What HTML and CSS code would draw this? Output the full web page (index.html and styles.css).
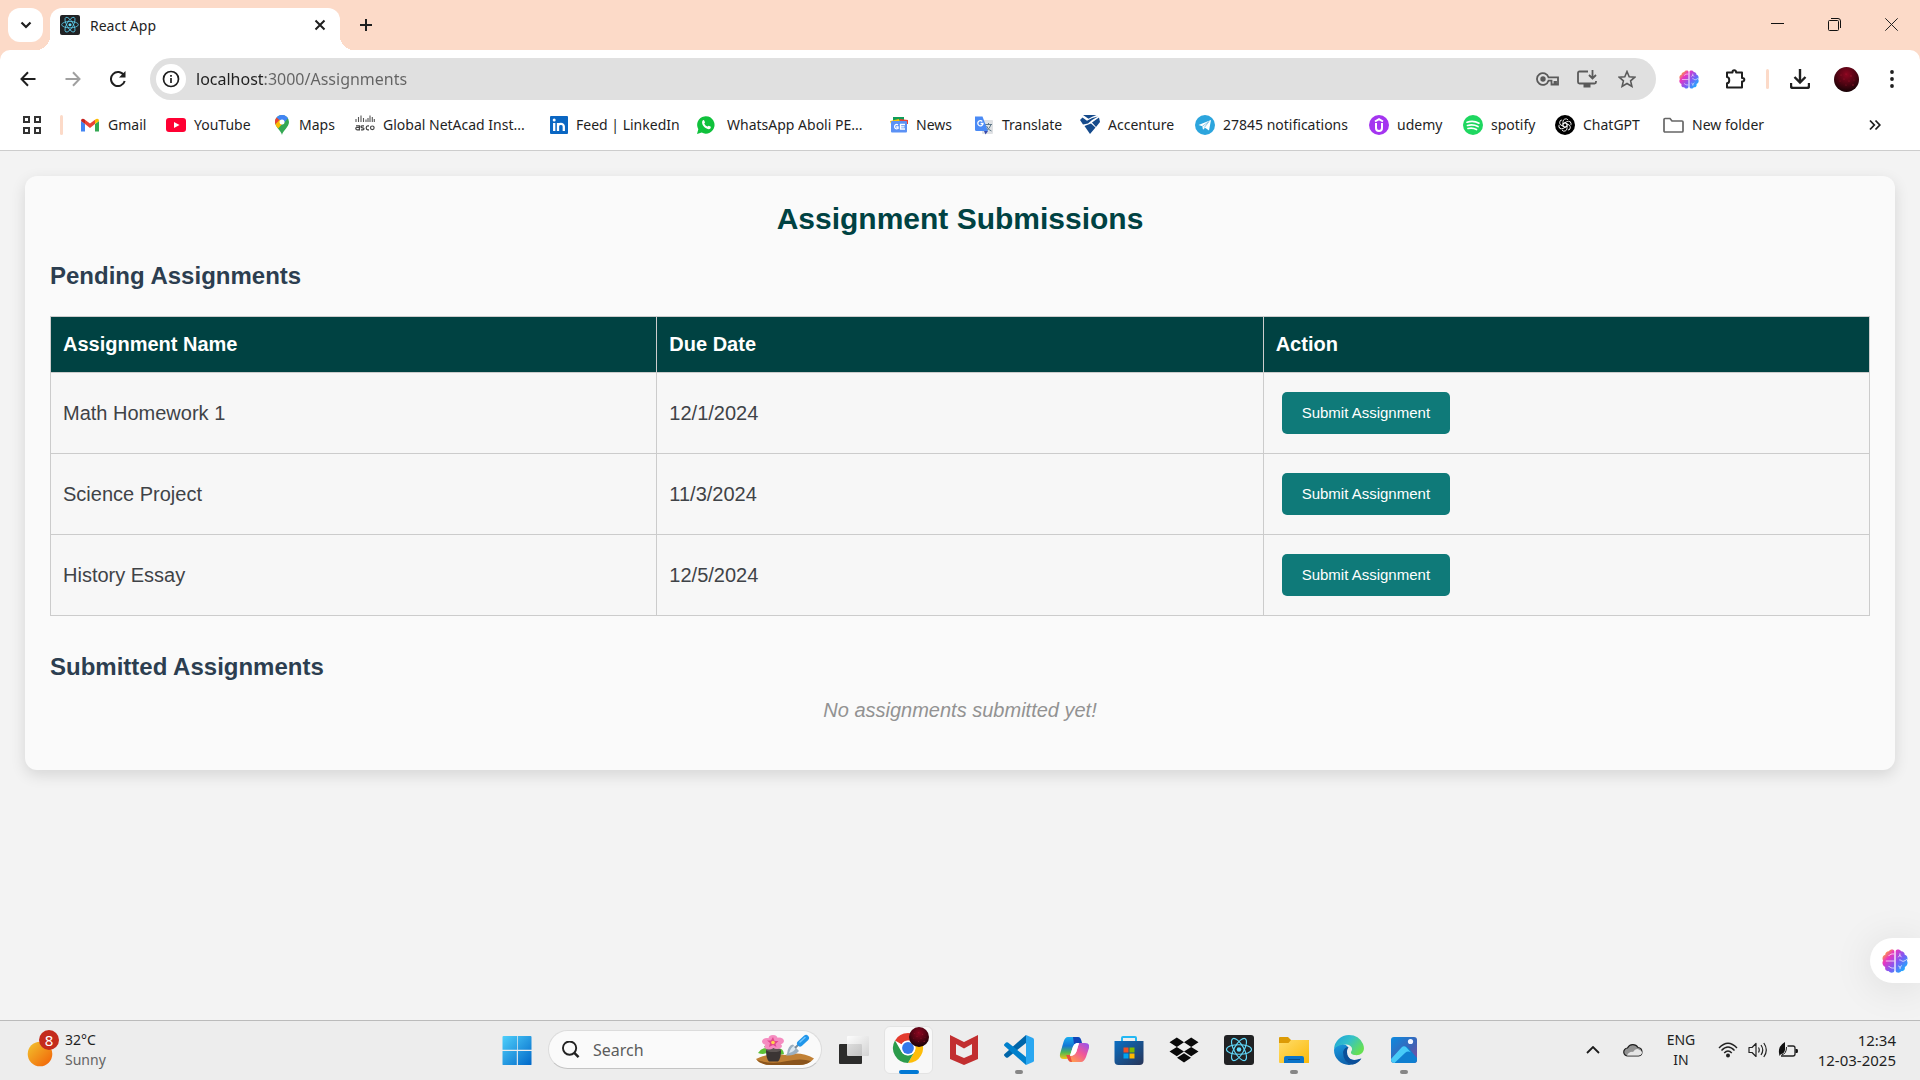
FILE: index.html
```html
<!DOCTYPE html>
<html lang="en">
<head>
<meta charset="utf-8">
<meta name="viewport" content="width=device-width, initial-scale=1">
<title>React App</title>
<link rel="stylesheet" href="styles.css">
</head>
<body>
<svg class="defs" width="0" height="0" aria-hidden="true">
  <defs>
    <linearGradient id="brain-fill" x1="0" y1="0" x2="24" y2="22" gradientUnits="userSpaceOnUse">
      <stop offset="0.1" stop-color="#ffb02e"/><stop offset="0.3" stop-color="#e935c1"/><stop offset="0.58" stop-color="#7b5cf5"/><stop offset="0.9" stop-color="#12b5ff"/>
    </linearGradient>
    <radialGradient id="avatar-fill" cx="0.5" cy="0.3" r="0.7">
      <stop offset="0" stop-color="#8c0620"/><stop offset="0.5" stop-color="#560414"/><stop offset="1" stop-color="#160205"/>
    </radialGradient>
    <linearGradient id="win-fill" x1="0" y1="0" x2="1" y2="1"><stop offset="0" stop-color="#4fd0fb"/><stop offset="1" stop-color="#0067c8"/></linearGradient>
    <linearGradient id="sun-fill" x1="0" y1="0" x2="1" y2="1"><stop offset="0" stop-color="#f2c52e"/><stop offset="1" stop-color="#f25e06"/></linearGradient>
    <linearGradient id="store-fill" x1="0" y1="0" x2="1" y2="1"><stop offset="0" stop-color="#0a6fc4"/><stop offset="1" stop-color="#283457"/></linearGradient>
    <linearGradient id="folder-fill" x1="0" y1="0" x2="1" y2="1"><stop offset="0" stop-color="#ffdd6b"/><stop offset="1" stop-color="#fbb909"/></linearGradient>
    <linearGradient id="photo-fill" x1="0" y1="0" x2="1" y2="1"><stop offset="0" stop-color="#0b8be0"/><stop offset="0.6" stop-color="#3f62b5"/><stop offset="1" stop-color="#8c4a9d"/></linearGradient>
    <linearGradient id="edge-top" x1="0" y1="0" x2="1" y2="0.6"><stop offset="0" stop-color="#1ba0dc"/><stop offset="0.5" stop-color="#35c1c8"/><stop offset="1" stop-color="#66e052"/></linearGradient>
    <linearGradient id="edge-low" x1="0" y1="0" x2="0.6" y2="1"><stop offset="0" stop-color="#1b9de2"/><stop offset="1" stop-color="#0c59a4"/></linearGradient>
    <linearGradient id="cop-left" x1="0" y1="0" x2="0" y2="1"><stop offset="0" stop-color="#1aaef0"/><stop offset="0.4" stop-color="#1376d6"/><stop offset="0.7" stop-color="#52b752"/><stop offset="1" stop-color="#f6c514"/></linearGradient>
    <linearGradient id="cop-right" x1="1" y1="0" x2="0.2" y2="1"><stop offset="0" stop-color="#8e52f4"/><stop offset="0.5" stop-color="#f0569a"/><stop offset="1" stop-color="#ff9d4f"/></linearGradient>
    <linearGradient id="view-fill" x1="0" y1="0" x2="1" y2="1"><stop offset="0" stop-color="#ffffff"/><stop offset="1" stop-color="#cfcfcf"/></linearGradient>
  </defs>
  <symbol id="react" viewBox="0 0 30 30">
    <rect width="30" height="30" rx="3" fill="#212224"/>
    <g fill="none" stroke="#61dafb" stroke-width="1.1"><ellipse cx="15" cy="14.500" rx="12.500" ry="4.800"/><ellipse cx="15" cy="14.500" rx="12.500" ry="4.800" transform="rotate(60 15 14.500)"/><ellipse cx="15" cy="14.500" rx="12.500" ry="4.800" transform="rotate(120 15 14.500)"/></g>
    <circle cx="15" cy="14.500" r="2.300" fill="#61dafb"/>
  </symbol>
  <symbol id="brain" viewBox="0 0 24 22">
    <path d="M11.400 2v18c0 2-4 2.600-5.200.3-2.400.4-3.900-1.700-3.200-3.800C.4 15.400-.2 12.400 1 10.700-.2 8.300.8 5.800 3 5.300 3 3 4.800 1.900 6.300 2 7.500-.3 11.400-.2 11.400 2zM12.600 2v18c0 2 4 2.600 5.200.3 2.400.4 3.900-1.700 3.200-3.800 2.600-1.100 3.200-4.100 2-5.800 1.200-2.400.2-4.900-2-5.400C21 3 19.200 1.900 17.700 2c-1.200-2.300-5.100-2.200-5.100 0z" fill="url(#brain-fill)"/>
    <path d="M3.500 11h7.900M6 6c1.400 0 1.500-1.500 3.500-1.500h1.700M6 16c1.400 0 1.500 1.500 3.500 1.500h1.700M15 7.500l1.500-1.800L18 7.500M16.500 4v2M16 10c2 0 2 1.500 4 1.200 1.400-.2 2-1.200 3-1.800M15 15.500l1.700 1.200 1.700-1.600M16.700 16.500v2" fill="none" stroke="#fff" stroke-width=".9" opacity="0.75"/>
  </symbol>
  <symbol id="avatar" viewBox="0 0 25 25">
    <circle cx="12.500" cy="12.500" r="12.500" fill="url(#avatar-fill)"/>
    <g fill="#c9283e" opacity="0.55"><circle cx="7" cy="8" r=".6"/><circle cx="12" cy="7" r=".5"/><circle cx="17" cy="9" r=".7"/><circle cx="10" cy="12" r=".6"/><circle cx="15" cy="14" r=".6"/><circle cx="19" cy="18" r=".8"/><circle cx="6" cy="14" r=".5"/><circle cx="12" cy="18" r=".6"/><circle cx="20" cy="13" r=".5"/></g>
  </symbol>
</svg>

<div class="window">
  <header class="chrome">
    <div class="tabstrip">
      <button class="tab-search" aria-label="Search tabs"><svg width="12" height="8" viewBox="0 0 12 8"><path d="M1.500 1.500 6 6l4.500-4.500" fill="none" stroke="#1f1f1f" stroke-width="2.200"/></svg></button>
      <div class="tab">
        <svg width="20" height="20"><use href="#react"/></svg>
        <span class="tab-title">React App</span>
        <button class="plain" aria-label="Close tab"><svg width="12" height="12" viewBox="0 0 12 12"><path d="M1.500 1.500l9 9M10.500 1.500l-9 9" stroke="#1f1f1f" stroke-width="2"/></svg></button>
      </div>
      <button class="new-tab plain" aria-label="New tab"><svg width="14" height="14" viewBox="0 0 14 14"><path d="M7 1v12M1 7h12" stroke="#1f1f1f" stroke-width="2"/></svg></button>
      <div class="window-buttons">
        <button class="plain" aria-label="Minimize"><svg width="13" height="13" viewBox="0 0 13 13"><path d="M0 5.500h13" stroke="#111"/></svg></button>
        <button class="plain" aria-label="Restore"><svg width="13" height="13" viewBox="0 0 13 13"><path d="M.5 3.500q0-1 1-1h8q1 0 1 1v8q0 1-1 1h-8q-1 0-1-1zM3 .5h7q2.500 0 2.500 2.500v7" fill="none" stroke="#111"/></svg></button>
        <button class="plain" aria-label="Close"><svg width="13" height="13" viewBox="0 0 13 13"><path d="M.3.3l12.400 12.400M12.700.3.3 12.700" stroke="#222"/></svg></button>
      </div>
    </div>

    <div class="toolbar">
      <nav class="nav-buttons" aria-label="History">
        <button class="plain" aria-label="Back"><svg width="16" height="16" viewBox="0 0 16 16"><path d="M15.500 8H2M8 1.300 1.500 8 8 14.700" fill="none" stroke="#1f1f1f" stroke-width="2"/></svg></button>
        <button class="plain" aria-label="Forward"><svg width="16" height="16" viewBox="0 0 16 16"><path d="M.5 8H14M8 1.300 14.500 8 8 14.700" fill="none" stroke="#a0a0a0" stroke-width="2"/></svg></button>
        <button class="plain" aria-label="Reload"><svg width="16" height="16" viewBox="0 0 16 16"><path d="M14 4.500A7 7 0 1 0 14.700 10" fill="none" stroke="#1f1f1f" stroke-width="2"/><path d="M15.500 0v6.500H9z" fill="#1f1f1f"/></svg></button>
      </nav>
      <div class="omnibox">
        <button class="site-info plain" aria-label="Site information"><svg width="18" height="18" viewBox="0 0 18 18"><circle cx="9" cy="9" r="7.500" fill="none" stroke="#1f1f1f" stroke-width="1.700"/><path d="M9 8v5M9 5v1.800" stroke="#1f1f1f" stroke-width="1.700"/></svg></button>
        <input class="url" type="text" aria-label="Address" value="localhost:3000/Assignments">
        <button class="omni-button plain" aria-label="Passwords"><svg width="23" height="14" viewBox="0 0 23 14"><path d="M12.500 5.300A5.900 5.900 0 1 0 12.500 8.700H15.500V12.500h3V10h1.500v2.500H22V5.300z" fill="none" stroke="#5a5a5a" stroke-width="1.800"/><circle cx="7" cy="7" r="2.700" fill="#5a5a5a"/></svg></button>
        <button class="omni-button plain" aria-label="Install app"><svg width="20" height="18" viewBox="0 0 20 18"><path d="M11 1.500H2.500Q1 1.500 1 3v9q0 1.500 1.500 1.500h15q1.500 0 1.500-1.500v-1M15.500 0v8M12 5l3.500 3.500L19 5" fill="none" stroke="#5a5a5a" stroke-width="1.800"/><path d="M6.500 14h7v3.500h-7z" fill="#5a5a5a"/></svg></button>
        <button class="omni-button plain" aria-label="Bookmark"><svg width="18" height="18" viewBox="0 0 18 18"><path d="M9 1.500l2.200 5.200 5.600.5-4.200 3.700 1.300 5.500L9 13.500l-4.900 2.900 1.300-5.500L1.200 7.200l5.600-.5z" fill="none" stroke="#5a5a5a" stroke-width="1.600"/></svg></button>
      </div>
      <div class="extensions">
        <button class="plain" aria-label="AI assistant"><svg width="20" height="19"><use href="#brain"/></svg></button>
        <button class="plain" aria-label="Extensions"><svg width="21" height="20" viewBox="0 0 21 20"><path d="M2 3.500h5.500V3a1.800 1.800 0 0 1 3.600 0v.5H17V9h.5a1.800 1.800 0 0 1 0 3.600H17v6H2v-4.300c3-.2 3-6 0-6.300z" fill="none" stroke="#1f1f1f" stroke-width="2" stroke-linejoin="round"/></svg></button>
        <span class="divider"></span>
        <button class="plain" aria-label="Downloads"><svg width="20" height="20" viewBox="0 0 20 20"><path d="M10 0v13M4.500 8 10 13.500 15.500 8M1 14v3q0 2 2 2h14q2 0 2-2v-3" fill="none" stroke="#1f1f1f" stroke-width="2.400"/></svg></button>
        <button class="plain" aria-label="Profile"><svg width="25" height="25"><use href="#avatar"/></svg></button>
        <button class="plain" aria-label="Menu"><svg width="4" height="18" viewBox="0 0 4 18"><g fill="#1f1f1f"><circle cx="2" cy="2" r="1.900"/><circle cx="2" cy="9" r="1.900"/><circle cx="2" cy="16" r="1.900"/></g></svg></button>
      </div>
    </div>

    <nav class="bookmarks" aria-label="Bookmarks">
      <button class="apps plain" aria-label="Apps"><svg width="18" height="18" viewBox="0 0 18 18"><path d="M1 1h5v5H1zM12 1h5v5h-5zM1 12h5v5H1zM12 12h5v5h-5z" fill="none" stroke="#333" stroke-width="2"/></svg></button>
      <span class="divider"></span>
      <div class="bookmark-list">
        <a href="#gmail"><svg width="20" height="20" viewBox="0 0 20 20"><path d="M1 16.500V6l4 3v7.500z" fill="#4285f4"/><path d="M19 16.500V6l-4 3v7.500z" fill="#34a853"/><path d="M1 6q0-3 3-2l1 .8V9L1 6z" fill="#c5221f"/><path d="M19 6q0-3-3-2l-1 .8V9l4-3z" fill="#fbbc04"/><path d="M5 4.800 10 8.600l5-3.800V9l-5 3.900L5 9z" fill="#ea4335"/></svg>Gmail</a>
        <a href="#youtube"><svg width="20" height="20" viewBox="0 0 20 20"><rect y="3" width="20" height="14" rx="3" fill="#ff0033"/><path d="M8 7l5.500 3L8 13z" fill="#fff"/></svg>YouTube</a>
        <a href="#maps"><svg width="18" height="20" viewBox="1 0 18 20"><path d="M10 20C9 15.500 3 12 3 7a7 7 0 0 1 14 0c0 5-6 8.500-7 13z" fill="#34a853"/><path d="M4.600 2.500A7 7 0 0 1 16 3.300L10 10z" fill="#4285f4"/><path d="M4.600 2.500A7 7 0 0 0 3.400 9.300L8.500 6z" fill="#ea4335"/><path d="M3.400 9.300c.6 1.700 1.700 2.900 2.700 4.200L12 7 7.700 4.800z" fill="#fbbc04"/><circle cx="10" cy="7" r="2.500" fill="#fff"/></svg>Maps</a>
        <a href="#netacad"><svg width="20" height="20" viewBox="0 0 20 20"><path d="M1 4v3M3.500 2v5M6 .5V7M8.500 3v4M11 4.500V7M13 3v4M15 .5V7M17.300 2v5M19.300 4v3" stroke="#555" stroke-width="1.100"/><path d="M1 10.800h3.400v4H2Q.8 14.800.8 13.600T2 12.500h2.400M9 10.800H7.200q-1.200 0-1.200 1t1.200 1h.6q1.200 0 1.200 1t-1.200 1H6M14 10.800h-1.200q-1.600 0-1.600 2t1.600 2H14" fill="none" stroke="#444" stroke-width="1.200"/><circle cx="17.300" cy="12.800" r="1.800" fill="none" stroke="#444" stroke-width="1.200"/></svg>Global NetAcad Inst...</a>
        <a href="#linkedin"><svg width="18" height="20" viewBox="0 0 18 20"><rect y="1" width="18" height="18" rx="1" fill="#0a66c2"/><path d="M4.200 8v8M8 8v8M8 11.500c0-3.500 5.800-3.500 5.800 0V16" fill="none" stroke="#fff" stroke-width="2.300"/><circle cx="4.200" cy="5" r="1.500" fill="#fff"/></svg>Feed | LinkedIn</a>
        <a href="#whatsapp" class="wide-gap"><svg width="18" height="20" viewBox="1 0 18 20"><path d="M1 19l1.300-4.700A8.700 8.700 0 1 1 5.700 17.600z" fill="#10c13c"/><path d="M6.700 5.400c.6-.6 1.200-.4 1.500.2l.8 1.700c0 .6-.8 1-.7 1.500.7 1.300 1.700 2.200 3 2.800.5 0 .9-.9 1.400-.9l1.800.9c.6.500.3 1.600-.4 2.200-2.200 1.600-7.700-2-8-6-.1-.9.100-1.800.6-2.400z" fill="#fff"/></svg>WhatsApp Aboli PE...</a>
        <a href="#news"><svg width="18" height="20" viewBox="1 0 18 20"><path d="M4 2h11v5H4z" fill="#0f9d58"/><path d="M1 6l9-2 2 5H2z" fill="#ffc107"/><path d="M19 5l-8-1v5h8z" fill="#ea4335"/><rect x="2" y="6" width="16" height="11.500" rx="1" fill="#5b91f5"/><path d="M9 9.800C4.500 7.800 4.500 15.500 9 13.500V12H7.200M16 9.500h-4.500v4.500H16M11.500 11.800h4" fill="none" stroke="#fff" stroke-width="1.300"/></svg>News</a>
        <a href="#translate"><svg width="20" height="20" viewBox="0 0 20 20"><rect x="8" y="5" width="11" height="14" rx="1" fill="#dfe1e4"/><path d="M11 9.500h7M14.500 8v1.500M17 9.500q-1 4-5 6.500M12.500 11q1.500 4 5 5" fill="none" stroke="#607988"/><path d="M1 1.500h7.500L14 16H2.500Q1 16 1 14.500z" fill="#4a8af5"/><path d="M10 16h4l-2.500 3.500z" fill="#3848ab"/><path d="M8.300 6.500A2.600 2.600 0 1 0 9 8.500H6.600" fill="none" stroke="#fff" stroke-width="1.300"/></svg>Translate</a>
        <a href="#accenture"><svg width="20" height="20" viewBox="0 0 20 20"><path d="M3 0h13.500Q12 1.500 8.500 3.800zM0 5l2.500-2.500L7 5.800Q12 2.500 18 1.500 12 4.500 8 8.500L3 9.500zM12 7.500 19 2.500 20 7l-4 5zM4.500 11l6.500-2.500 4.500 4L10 19z" fill="#154a8b"/></svg>Accenture</a>
        <a href="#telegram"><svg width="20" height="20" viewBox="0 0 20 20"><circle cx="10" cy="10" r="10" fill="#2ca5dd"/><path d="M3.500 10 16 5l-2 10.500-4-2.800L8 14.700l-.7-3.400z" fill="#fff"/><path d="M7.300 11.300 14 6.500l-4.700 6" fill="none" stroke="#94c9e6"/></svg>27845 notifications</a>
        <a href="#udemy"><svg width="20" height="20" viewBox="0 0 20 20"><circle cx="10" cy="10" r="10" fill="#a435f0"/><path d="M6 6.500l4-2.400 4 2.400M7 8v5c0 4 6 4 6 0V8" fill="none" stroke="#fff" stroke-width="2"/></svg>udemy</a>
        <a href="#spotify"><svg width="20" height="20" viewBox="0 0 20 20"><circle cx="10" cy="10" r="10" fill="#1ed760"/><path d="M4 7.200q6.500-2 12 1M4.500 10.500q5.500-1.500 10.500 1M5 13.500q4.500-1.200 8.500 1" fill="none" stroke="#fff" stroke-width="1.700" stroke-linecap="round"/></svg>spotify</a>
        <a href="#chatgpt"><svg width="20" height="20" viewBox="0 0 20 20"><circle cx="10" cy="10" r="10" fill="#000"/><g fill="none" stroke="#fff" stroke-width=".9"><path id="petal" d="M10 12.300 8 11.200V6.700a2.800 2.800 0 0 1 5-1.800"/><use href="#petal" transform="rotate(60 10 10)"/><use href="#petal" transform="rotate(120 10 10)"/><use href="#petal" transform="rotate(180 10 10)"/><use href="#petal" transform="rotate(240 10 10)"/><use href="#petal" transform="rotate(300 10 10)"/></g></svg>ChatGPT</a>
        <a href="#folder"><svg width="22" height="20" viewBox="0 0 22 20"><path d="M2 4.500q0-1 1-1h5l2 2.500h10q1 0 1 1v9q0 1-1 1H3q-1 0-1-1z" fill="none" stroke="#666" stroke-width="1.700"/></svg>New folder</a>
      </div>
      <button class="more plain" aria-label="More bookmarks"><svg width="12" height="12" viewBox="0 0 12 12"><path d="M1 1.500 5.300 6 1 10.500M6.500 1.500 10.800 6l-4.300 4.500" fill="none" stroke="#1f1f1f" stroke-width="1.800"/></svg></button>
    </nav>
  </header>

  <main class="page">
    <section class="card">
      <h1>Assignment Submissions</h1>
      <h2>Pending Assignments</h2>
      <table>
        <thead><tr><th scope="col">Assignment Name</th><th scope="col">Due Date</th><th scope="col">Action</th></tr></thead>
        <tbody>
          <tr><td>Math Homework 1</td><td>12/1/2024</td><td><button class="submit">Submit Assignment</button></td></tr>
          <tr><td>Science Project</td><td>11/3/2024</td><td><button class="submit">Submit Assignment</button></td></tr>
          <tr><td>History Essay</td><td>12/5/2024</td><td><button class="submit">Submit Assignment</button></td></tr>
        </tbody>
      </table>
      <h2>Submitted Assignments</h2>
      <p class="empty">No assignments submitted yet!</p>
    </section>
    <button class="assistant" aria-label="Open assistant"><svg width="26" height="24"><use href="#brain"/></svg></button>
  </main>

  <footer class="taskbar">
    <button class="weather plain">
      <svg width="32" height="36" viewBox="0 0 32 36"><circle cx="13" cy="22" r="12.300" fill="url(#sun-fill)"/></svg>
      <span class="badge">8</span>
      <span class="weather-text"><span>32°C</span><span class="dim">Sunny</span></span>
    </button>
    <div class="apps-row">
      <button class="app plain" aria-label="Start"><svg width="30" height="30" viewBox="0 0 30 30"><path d="M1.500 1h13.700v13.700H.5V2q0-1 1-1zM15.900 1h12.600q1 0 1 1v12.700H15.900zM.5 15.900h14.300v14.300H1.500q-1 0-1-1zM15.900 15.900h13.600v13.300q0 1-1 1H15.900z" fill="url(#win-fill)"/></svg></button>
      <label class="search">
        <svg width="18" height="18" viewBox="1 1 19 19"><circle cx="9" cy="8.500" r="7" fill="none" stroke="#222" stroke-width="2"/><path d="M14 13.500l4.500 4.500" stroke="#222" stroke-width="2.600"/></svg>
        <input type="text" placeholder="Search" aria-label="Search">
        <svg width="60" height="32" viewBox="0 0 60 32"><path d="M1 25q14-7 29-4 16-4 29 3.500Q54 31 44 31H17Q5 31 1 25z" fill="#c08035"/><path d="M2 26q15 5 30 1 14-3 24 0-4 4-12 4H17Q6 31 2 26z" fill="#8a541c"/><path d="M3 19q5-7 12-4-3 7-12 4zM29 20q-1-7-8-5 1 7 8 5zM9 12q5 0 8 5l-5 1z" fill="#5cc036"/><path d="M11 16h15q0 9-3 11.500h-9Q11 25 11 16z" fill="#3b3534"/><ellipse cx="18.500" cy="16" rx="7.500" ry="2" fill="#5d5553"/><g fill="#f58cc0"><ellipse cx="18" cy="4.500" rx="4.500" ry="3.500"/><ellipse cx="12" cy="7.500" rx="5" ry="3.500"/><ellipse cx="24" cy="7" rx="5" ry="3.500"/><ellipse cx="14" cy="12.500" rx="4.500" ry="3"/><ellipse cx="22" cy="12" rx="5" ry="3"/></g><path d="M18 3l1.500 4 4 0-3 3 1 3-3.500-2-4 2 1-4-3-2.500h4z" fill="#e2488e"/><circle cx="18" cy="8.500" r="1.800" fill="#ffd34a"/><path d="M32 20q1-9 6-9.500l6 6.500q-4 5-13 4.500z" fill="#9cb0c0"/><path d="M34 19q2-6 5-7l2 2q-2 4-7 5z" fill="#dbe7ef"/><path d="M40 14l4.500-4.500" stroke="#778a99" stroke-width="2"/><path d="M45 9.500 51 4" stroke="#2196ea" stroke-width="6" stroke-linecap="round"/><path d="M45 8 50 3.500" stroke="#6fc6ff" stroke-width="1.500" stroke-linecap="round"/></svg>
      </label>
      <button class="app plain" aria-label="Task view"><svg width="30" height="30" viewBox="0 0 30 30"><rect y="9" width="23" height="20" rx="1" fill="#2c2c2b"/><rect x="8" y="1" width="22" height="20" rx="1" fill="url(#view-fill)" opacity=".88"/></svg></button>
      <button class="app current plain" aria-label="Chrome"><svg width="38" height="38" viewBox="0 0 38 38"><circle cx="16" cy="21" r="15" fill="#fff"/><path d="M3 13.500A15 15 0 0 1 29 13.500H16a7.500 7.500 0 0 0-6.500 3.800z" fill="#e33b2e"/><path d="M29 13.500A15 15 0 0 1 16 36l6.500-11.200a7.500 7.500 0 0 0-.2-7.700L20 13.500z" fill="#fdbd0a"/><path d="M3 13.500A15 15 0 0 0 16 36l6.500-11.200a7.500 7.500 0 0 1-13 0z" fill="#2b9b4b"/><circle cx="16" cy="21" r="7.300" fill="#fff"/><circle cx="16" cy="21" r="5.900" fill="#3478ea"/><use href="#avatar" x="17" y="0" width="20" height="20"/></svg></button>
      <button class="app plain" aria-label="McAfee"><svg width="30" height="30" viewBox="0 0 30 30"><path d="M1 0l14 7L29 0v24L15 30 1 24zM7 9v10.500l8 3.500 8-3.500V9l-8 4.500z" fill="#c22f30" fill-rule="evenodd"/></svg></button>
      <button class="app open plain" aria-label="Visual Studio Code"><svg width="30" height="30" viewBox="0 0 30 30"><path d="M22 0v8L4 22.500q-1 .5-2 0L.5 21q-1-1 0-2z" fill="#0065a9"/><path d="M22 30v-8L4 7.500q-1-.5-2 0L.5 9q-1 1 0 2z" fill="#0080cc"/><path d="M22 0l7 3q1 .5 1 1.500v21q0 1-1 1.500l-7 3z" fill="#2aa7f1"/></svg></button>
      <button class="app plain" aria-label="Copilot"><svg width="30" height="30" viewBox="0 0 30 30"><path d="M9 2h10q3 0 2 3l-1 3q-5 0-6.500 5l-3 9Q9.500 24 7 24H5q-5 0-4-5L4.500 7Q6 2 9 2z" fill="url(#cop-left)"/><path d="M14 2h5q3 0 4 6h-5l-3 1z" fill="#1244b7"/><path d="M22 27H12q-3 0-2-3l1-3q5 0 6.500-5l2.500-8h6q5 0 4 5l-3 9Q25 27 22 27z" fill="url(#cop-right)"/><path d="M7 20h4l2 7q-4 0-5-5z" fill="#e94f3c"/><path d="M14 11.500q1-3 3.500-3.500h2.500L17.500 16.500Q16 20.500 11 21z" fill="#fff"/></svg></button>
      <button class="app plain" aria-label="Microsoft Store"><svg width="30" height="30" viewBox="0 0 30 30"><path d="M8 8V3q0-1 1-1h12q1 0 1 1v5" fill="none" stroke="#24b8f3" stroke-width="2"/><path d="M.5 6h29v20q0 4-4 4h-21q-4 0-4-4z" fill="url(#store-fill)"/><path d="M9.500 12.500h5v5h-5z" fill="#f25022"/><path d="M15.500 12.500h5v5h-5z" fill="#7fba00"/><path d="M9.500 18.500h5v5h-5z" fill="#00a4ef"/><path d="M15.500 18.500h5v5h-5z" fill="#ffb900"/></svg></button>
      <button class="app plain" aria-label="Dropbox"><svg width="30" height="30" viewBox="0 0 30 30"><path d="M7.800 2.500 15 7.200l-7.200 4.700L.5 7.200zM22.200 2.500l7.300 4.700-7.300 4.700L15 7.200zM7.800 12l7.200 4.600-7.200 4.700L.5 16.600zM22.200 12l7.300 4.600-7.300 4.700L15 16.600zM15 18.200l7 4.500-7 4.800-7-4.800z" fill="#0a0a0a"/></svg></button>
      <button class="app plain" aria-label="React app"><svg width="30" height="30"><use href="#react"/></svg></button>
      <button class="app open plain" aria-label="File Explorer"><svg width="30" height="30" viewBox="0 0 30 30"><path d="M0 3q0-1 1-1h8l3 3h17q1 0 1 1v6H0z" fill="#dc9b06"/><path d="M0 8h9.500L12 5h17q1 0 1 1v21.500q0 .5-1 .5H1q-1 0-1-1z" fill="url(#folder-fill)"/><path d="M5 28v-5q0-2 2-2h16q2 0 2 2v5z" fill="#0b74c9"/><path d="M9 24.500h12" stroke="#064e8d"/></svg></button>
      <button class="app plain" aria-label="Edge"><svg width="30" height="30" viewBox="0 0 30 30"><path d="M0 15A15 15 0 0 0 15 30q7 0 12-6.500-11 4-14-3.500-2-5 1-8-3-4-8-2.500Q0 11 0 15z" fill="url(#edge-low)"/><path d="M9 17q0 11 10 12.500 5-1 8.500-6-9 4-13-1.500-3-5 0-10-4 0-5.500 5z" fill="#0b4f99"/><path d="M0 14A15 15 0 0 1 15 0q10 0 14 9c3 7-1.500 12-8.500 11-3-.4-4.500-2-3-4 1.500-2.500 0-6-5-6.500Q4 9 0 14z" fill="url(#edge-top)"/></svg></button>
      <button class="app open plain" aria-label="Photos"><svg width="30" height="30" viewBox="0 0 30 30"><rect x="2" y="2" width="26" height="26" rx="3" fill="url(#photo-fill)"/><path d="M15 11q3 0 4.500 2L28 23v2q0 3-3 3H5z" fill="#0f7fd0"/><path d="M2 24 12.500 12.500q2.500-2.500 5 0L22 17.500q-3-2-6 .5L5.500 28Q2 28 2 24.500z" fill="#47cbf8"/><circle cx="21.500" cy="6.500" r="2.600" fill="#f2f5ff"/></svg></button>
    </div>
    <div class="tray">
      <button class="plain" aria-label="Hidden icons"><svg width="14" height="8" viewBox="0 0 14 8"><path d="M1 7l6-6 6 6" fill="none" stroke="#1c1c1c" stroke-width="1.800"/></svg></button>
      <button class="plain" aria-label="OneDrive"><svg width="20" height="14" viewBox="0 0 20 14"><path d="M5 13a4 4 0 0 1-.5-8A6 6 0 0 1 15 4.500 4.300 4.300 0 0 1 15.500 13z" fill="#929292" stroke="#202020" stroke-width="1.200"/><path d="M4 12.400q2-4 6-3.500 3-4.500 6.500-2 3 1 2.400 3.500-1 2-3 2z" fill="#e5e5e5"/></svg></button>
      <button class="language plain"><span>ENG</span><span>IN</span></button>
      <button class="system plain" aria-label="Network, sound, battery">
        <svg width="20" height="16" viewBox="0 0 20 16"><path d="M1 6q9-9.500 18 0M3.500 8.500q6.500-7 13 0M6.200 11q3.800-4 7.600 0" fill="none" stroke="#222" stroke-width="1.400"/><circle cx="10" cy="13.500" r="2" fill="#222"/></svg>
        <svg width="20" height="16" viewBox="0 0 20 16"><path d="M1 5.500h3l4-4v13l-4-4H1z" fill="none" stroke="#222" stroke-width="1.200" stroke-linejoin="round"/><path d="M10.500 5.500q1.500 2.500 0 5M13 3q3.500 5 0 10M15.800 1q5 7 0 14" fill="none" stroke="#222" stroke-width="1.200"/></svg>
        <svg width="20" height="16" viewBox="0 0 20 16"><path d="M9.500 4H15q2 0 2 2v6q0 2-2 2H3" fill="none" stroke="#222" stroke-width="1.300"/><path d="M17.500 7h1.500q1 0 1 2t-1 2h-1.500z" fill="#111"/><path d="M7 0v8q-1 4-4 4L1.500 14 1 11q-1-7 6-11z" fill="#111"/><path d="M8.500 5q0 7-5 8" fill="none" stroke="#222"/></svg>
      </button>
      <button class="clock plain"><span>12:34</span><span>12-03-2025</span></button>
    </div>
  </footer>
</div>
</body>
</html>
```
FILE: styles.css
```css
* { box-sizing: border-box; }

body {
  margin: 0;
  background: #f3f3f3;
  font-family: "Noto Sans", "Open Sans", sans-serif;
  font-size: 14px;
  color: #1f1f1f;
}

button, input { font: inherit; color: inherit; }
svg { display: block; flex: none; }
.defs { position: absolute; }

.window {
  display: flex;
  flex-direction: column;
  min-height: 100vh;
}

.plain {
  display: flex;
  align-items: center;
  justify-content: center;
  padding: 0;
  border: 0;
  background: none;
}

.divider {
  width: 3px;
  height: 20px;
  border-radius: 2px;
  background: #fcdac8;
}

/* Browser frame */
.chrome {
  background: #fcdac8;
  border-bottom: 1px solid #cdcdcd;
}

.tabstrip {
  display: flex;
  align-items: stretch;
  height: 50px;
  padding-left: 8px;
}

.tab-search {
  display: flex;
  align-items: center;
  justify-content: center;
  width: 35px;
  height: 34px;
  margin: 8px 7px 0 0;
  border: 0;
  border-radius: 12px;
  background: #fff;
}

.tab {
  position: relative;
  display: flex;
  align-items: center;
  gap: 10px;
  width: 290px;
  margin-top: 8px;
  padding: 0 14px 8px 10px;
  border-radius: 12px 12px 0 0;
  background: #fff;
}

.tab::before,
.tab::after {
  content: "";
  position: absolute;
  bottom: 0;
  width: 14px;
  height: 14px;
}

.tab::before { right: 100%; background: radial-gradient(circle at 0 0, transparent 14px, #fff 14px); }
.tab::after { left: 100%; background: radial-gradient(circle at 100% 0, transparent 14px, #fff 14px); }

.tab-title { flex: 1; }

.new-tab { width: 52px; }

.window-buttons {
  display: flex;
  margin-left: auto;
}

.window-buttons button { width: 57px; padding-bottom: 1px; }

.toolbar {
  display: flex;
  align-items: center;
  height: 58px;
  padding: 0 5px;
  border-radius: 10px 10px 0 0;
  background: #fff;
}

.nav-buttons { display: flex; margin-right: 10px; }
.nav-buttons button { width: 45px; height: 42px; }

.omnibox {
  display: flex;
  flex: 1;
  align-items: center;
  height: 42px;
  margin-right: 10px;
  padding: 0 9px 0 6px;
  border-radius: 21px;
  background: #e0e0e0;
}

.site-info {
  width: 30px;
  height: 30px;
  border-radius: 50%;
  background: #fff;
}

.url {
  flex: 1;
  min-width: 0;
  margin-left: 10px;
  padding: 0;
  border: 0;
  background: linear-gradient(90deg, #1f1f1f 68px, #626262 68px);
  background-clip: text;
  -webkit-background-clip: text;
  -webkit-text-fill-color: transparent;
  font-size: 16px;
}

.omni-button { width: 40px; height: 40px; }

.extensions { display: flex; align-items: center; }
.extensions button { width: 46px; height: 40px; }
.extensions .divider { margin: 0 8px; }

.bookmarks {
  display: flex;
  align-items: center;
  height: 42px;
  padding: 0 24px 9px 14px;
  background: #fff;
}

.apps { width: 36px; margin-right: 10px; }
.bookmarks .divider { margin-right: 17px; }

.bookmark-list {
  display: grid;
  flex: 1;
  grid-template-columns: 86px 107px 82px 195px 147px 193px 84px 106px 115px 174px 94px 92px 107px 1fr;
}

.bookmark-list a {
  display: flex;
  align-items: center;
  gap: 8px;
  color: #1f1f1f;
  text-decoration: none;
  white-space: nowrap;
}

.bookmark-list .wide-gap { gap: 12px; }

.more { width: 42px; }

/* Web page */
.page {
  position: relative;
  flex: 1;
  padding: 25px;
  font-family: "Liberation Sans", Arial, sans-serif;
}

.card {
  padding: 26px 25px 48px;
  border-radius: 12px;
  background: #fafafa;
  box-shadow: 0 5px 15px rgba(0, 0, 0, 0.12);
}

h1 {
  margin: 0 0 26px;
  font-size: 30px;
  line-height: 34px;
  text-align: center;
  color: #004242;
}

h2 {
  margin: 0;
  font-size: 24px;
  line-height: 28px;
  color: #2c3e50;
}

table {
  width: 100%;
  margin: 26px 0 37px;
  border-collapse: collapse;
  table-layout: fixed;
  background: #f7f7f7;
  font-size: 20px;
  line-height: 24px;
  color: #3f4347;
}

th, td {
  padding: 12px;
  border: 1px solid #ccc;
  text-align: left;
}

th {
  padding: 15px 12px 16px;
  background: #004242;
  color: #fff;
}

.submit {
  display: block;
  height: 42px;
  margin: 7px 6px;
  padding: 0 20px;
  border: 0;
  border-radius: 5px;
  background: #0f7a79;
  font-size: 15px;
  color: #fff;
}

.empty {
  margin: 17px 0 0;
  font-size: 20px;
  font-style: italic;
  line-height: 24px;
  text-align: center;
  color: #929292;
}

.assistant {
  position: absolute;
  right: 0;
  bottom: 37px;
  display: flex;
  align-items: center;
  width: 50px;
  height: 45px;
  padding: 0 0 0 12px;
  border: 0;
  border-radius: 23px 0 0 23px;
  background: #fff;
  box-shadow: 0 4px 40px rgba(0, 0, 0, 0.1);
}

/* Taskbar */
.taskbar {
  display: grid;
  grid-template-columns: 1fr auto 1fr;
  align-items: center;
  height: 60px;
  padding: 0 24px 2px;
  border-top: 1px solid #bbb;
  background: #ededed;
  font-size: 15px;
  line-height: 20px;
}

.weather {
  position: relative;
  justify-self: start;
  gap: 6px;
  margin-left: 3px;
}

.badge {
  position: absolute;
  top: 0;
  left: 12px;
  width: 20px;
  height: 20px;
  border-radius: 50%;
  background: #c42b1c;
  color: #fff;
}

.weather-text { display: grid; font-size: 14px; text-align: left; }
.dim { color: #646464; }

.apps-row { display: flex; align-items: center; }

.app {
  position: relative;
  width: 55px;
  height: 48px;
}

.current::before {
  content: "";
  position: absolute;
  inset: 0 3px;
  border: 1px solid #e3e3e3;
  border-radius: 6px;
  background: #f8f8f8;
}

.current svg { position: relative; margin: -7px 0 0 5px; }

.open::after,
.current::after {
  content: "";
  position: absolute;
  bottom: 0;
  width: 8px;
  height: 4px;
  border-radius: 2px;
  background: #868686;
}

.current::after { width: 20px; background: #0078d4; }

.search {
  display: flex;
  align-items: center;
  width: 274px;
  height: 39px;
  margin: 0 4px;
  padding: 0 6px 0 13px;
  border: 1px solid #dcdcdc;
  border-bottom-color: #c4c4c4;
  border-radius: 20px;
  background: #fafafa;
}

.search input {
  flex: 1;
  min-width: 0;
  margin-left: 13px;
  padding: 0;
  border: 0;
  background: none;
  font-size: 16px;
}

.search input::placeholder { color: #5c5c5c; opacity: 1; }

.tray { display: flex; align-items: center; justify-self: end; }
.tray > button { width: 40px; height: 48px; }
.tray .language { display: grid; align-content: center; width: 56px; font-size: 14px; }
.tray .system { gap: 10px; width: 97px; margin-right: 6px; }
.tray .clock { display: grid; align-content: center; justify-content: end; width: 84px; text-align: right; }
```
